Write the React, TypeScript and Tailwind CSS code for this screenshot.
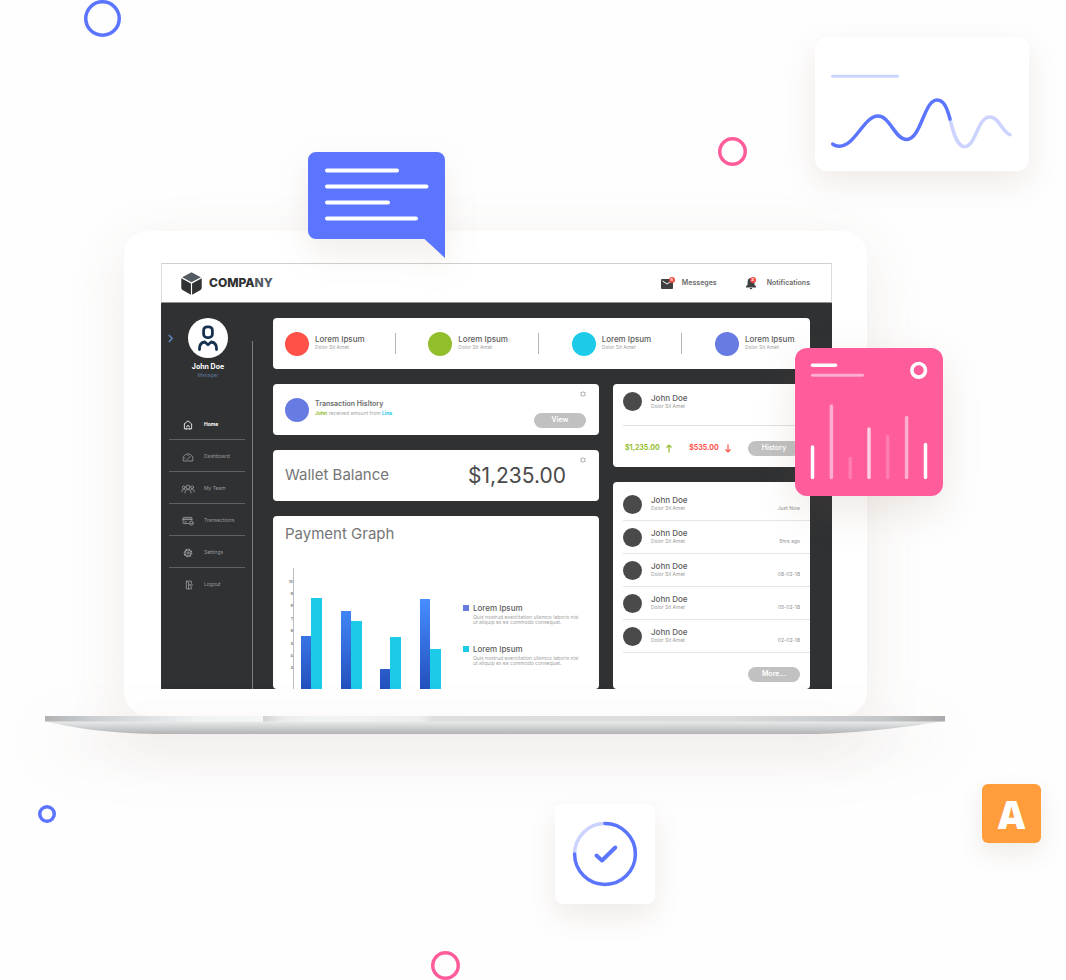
import type { ReactNode } from "react";

const cardClass = "rounded-[4px] bg-white";

function Ring({ className, size, color }: { className: string; size: number; color: string }) {
  return (
    <svg
      viewBox={`0 0 ${size} ${size}`}
      className={`absolute ${className}`}
      fill="none"
      stroke={color}
      strokeWidth="3.500"
      aria-hidden="true"
    >
      <circle cx={size / 2} cy={size / 2} r={size / 2 - 1.75} />
    </svg>
  );
}

function Pill({ children }: { children: ReactNode }) {
  return (
    <button
      type="button"
      className="flex h-[15px] w-[52px] items-center justify-center rounded-full bg-[#c1c1c1] text-[7px] font-semibold text-white"
    >
      {children}
    </button>
  );
}

function GearButton() {
  return (
    <button type="button" aria-label="Card settings" className="block">
      <svg viewBox="0 0 12 12" className="size-[6px]" fill="none" stroke="#a0a0a0" strokeWidth="1.500">
        <path d="M6 .8 7.500 3.200 10.600 3.200 9 6l1.600 2.800H7.500L6 11.200 4.500 8.800H1.400L3 6 1.400 3.200h3.100Z" />
      </svg>
    </button>
  );
}

function NavIcon({ children }: { children: ReactNode }) {
  return (
    <svg
      viewBox="0 0 24 18"
      className="h-[10px] w-[14px]"
      fill="none"
      stroke="currentColor"
      strokeWidth="1.5"
      strokeLinecap="round"
      strokeLinejoin="round"
    >
      {children}
    </svg>
  );
}

const navItems = [
  {
    label: "Home",
    icon: (
      <NavIcon>
        <path d="M5.500 7 12 1.500 18.500 7V16h-4M5.500 7v9h4M9.500 12.500a2.500 2.500 0 0 1 5 0M8.500 16h7" />
      </NavIcon>
    ),
  },
  {
    label: "Dashboard",
    icon: (
      <NavIcon>
        <path d="M3.500 15.500C1.500 8.500 6 3.500 12 3.500s10.500 5 8.500 12ZM10.500 13.500 16.500 7.500M6 11h1M12 6v.5" />
      </NavIcon>
    ),
  },
  {
    label: "My Team",
    icon: (
      <NavIcon>
        <circle cx="12" cy="5.500" r="3.500" />
        <circle cx="4.500" cy="6" r="2.500" />
        <circle cx="19.500" cy="6" r="2.500" />
        <path d="M6.500 16c0-4 2-6 5.500-6s5.500 2 5.500 6M1 14c0-3 1-4.500 3.500-4.500S7 10 7.500 11M23 14c0-3-1-4.500-3.500-4.500S17 10 16.500 11" />
      </NavIcon>
    ),
  },
  {
    label: "Transections",
    icon: (
      <NavIcon>
        <path d="M13 13.500H4a1 1 0 0 1-1-1v-9a1 1 0 0 1 1-1h14a1 1 0 0 1 1 1V8M3 5.500h16M3 6.500h16M6 10.500h3" />
        <circle cx="18" cy="13" r="3.500" />
        <path d="m16.500 13 1.200 1.200L20 12" />
      </NavIcon>
    ),
  },
  {
    label: "Settings",
    icon: (
      <NavIcon>
        <circle cx="12" cy="9" r="5.500" strokeWidth="2" />
        <circle cx="12" cy="9" r="2" />
        <circle cx="12" cy="9" r="7" strokeWidth="2" strokeDasharray="2.500 3" strokeLinecap="butt" />
      </NavIcon>
    ),
  },
  {
    label: "Logout",
    icon: (
      <NavIcon>
        <path d="M18 5.500V2H9v14h9v-3.500M9 2l4 2.500V16M20.500 9H15M17 7l-2 2 2 2" />
      </NavIcon>
    ),
  },
];

const stats = [
  { id: "red", dot: "bg-[#ff5148]" },
  { id: "green", dot: "bg-[#92be2c]" },
  { id: "cyan", dot: "bg-[#1ccbe8]" },
  { id: "indigo", dot: "bg-[#687be2]" },
];

const activity = ["Just Now", "5hrs ago", "08-02-18", "05-02-18", "02-02-18"];

const bars = [
  { x: 16, blue: 70, cyan: 32 },
  { x: 56, blue: 45, cyan: 55 },
  { x: 95, blue: 103, cyan: 71 },
  { x: 135, blue: 33, cyan: 83 },
];

function Badge({ count }: { count: number }) {
  return (
    <span className="absolute right-0 top-0 flex size-[6px] items-center justify-center rounded-full bg-[#f2483f] text-[4px] font-bold leading-none text-white">
      {count}
    </span>
  );
}

function TopBar() {
  return (
    <header className="flex h-10 items-center justify-between border border-b-[#8f9290] border-l-[#dcdcdc] border-r-[#dcdcdc] border-t-[#cfcfcf] bg-white pl-[19px] pr-[21px]">
      <a href="#home" className="flex items-center gap-[7px] text-[12px] font-extrabold leading-4">
        <svg viewBox="0 0 22 24" className="h-[23px] w-[21px]" aria-hidden="true">
          <path d="M11 .3 20.800 5.500 11 10.700 1.200 5.500Z" fill="#555b62" />
          <path d="M.3 6.600 10.400 12v11.700L2 19.100A3 3 0 0 1 .3 16.400Z" fill="#2f3133" />
          <path d="M21.700 6.600 11.600 12v11.700L20 19.100a3 3 0 0 0 1.700-2.700Z" fill="#2f3133" />
        </svg>
        <span className="text-[#2f3133]">
          COMPA<span className="text-[#555b62]">NY</span>
        </span>
      </a>
      <div className="flex items-center gap-[29px] text-[7px] font-semibold text-[#6b6b6b]">
        <a href="#messages" className="flex items-center gap-[7px]">
          <span className="relative block h-[13px] w-[14px]">
            <svg viewBox="0 0 14 13" className="h-[13px] w-[14px]" aria-hidden="true">
              <rect y="2" width="12" height="10" rx="1" fill="#3f4041" />
              <path d="m1.500 4 4.500 3 3.500-2.300" fill="none" stroke="#fff" />
            </svg>
            <Badge count={5} />
          </span>
          Messeges
        </a>
        <a href="#notifications" className="flex items-center gap-[11px]">
          <span className="relative block h-[13px] w-[10px]">
            <svg viewBox="0 0 10 13" className="h-[13px] w-[10px]" fill="#3f4041" aria-hidden="true">
              <path d="M5 1C2.500 1 1.600 3 1.600 5v2.500L0 9.500v1h10v-1L8.400 7.500V5c0-2-1-4-3.400-4ZM3.700 11a1.300 1.300 0 0 0 2.600 0Z" />
            </svg>
            <Badge count={3} />
          </span>
          Notifications
        </a>
      </div>
    </header>
  );
}

function Sidebar() {
  return (
    <aside className="relative w-[92px] shrink-0 px-2 pt-[15px]">
      <span aria-hidden="true" className="absolute bottom-0 right-0 top-[38px] w-px bg-[#7c7d7f]" />
      <button type="button" aria-label="Collapse menu" className="absolute left-[6px] top-[31px]">
        <svg viewBox="0 0 8 10" className="h-[9px] w-[7px]" fill="none" stroke="#6189bd" strokeWidth="1.700">
          <path d="M2 1 6 5 2 9" />
        </svg>
      </button>
      <div className="flex flex-col items-center pl-[2px]">
        <span className="flex size-10 items-center justify-center rounded-full bg-white">
          <svg
            viewBox="0 0 20 26"
            className="h-[26px] w-[20px]"
            fill="none"
            stroke="#17324f"
            strokeWidth="2.800"
            strokeLinecap="round"
            strokeLinejoin="round"
            aria-hidden="true"
          >
            <rect x="5.600" y="1.800" width="8.800" height="10.800" rx="3.600" />
            <path d="M1.500 24.500v-1.200c0-3.300 2.200-5.800 5.300-6.300L10 19.700l3.200-2.700c3.100.5 5.300 3 5.300 6.300v1.200" />
          </svg>
        </span>
        <span className="mt-1 text-[7px] font-bold leading-[10px] text-white">John Doe</span>
        <span className="text-[5px] leading-[6px] text-[#5d7898]">Manager</span>
      </div>
      <nav className="mt-[30px]">
        <ul>
          {navItems.map((item, i) => (
            <li key={item.label} className={i < navItems.length - 1 ? "border-b border-[#606163]" : ""}>
              <a
                href={`#${item.label.toLowerCase().replace(" ", "-")}`}
                className={`flex h-[31px] items-center gap-[9px] pl-3 pt-[3px] text-[5px] ${
                  i === 0 ? "font-bold text-white" : "text-[#9b9c9d]"
                }`}
              >
                {item.icon}
                {item.label}
              </a>
            </li>
          ))}
        </ul>
      </nav>
    </aside>
  );
}

function StatsCard() {
  return (
    <section className={`${cardClass} flex h-[51px] items-center justify-between pl-3 pr-[18px]`}>
      {stats.map((s, i) => (
        <div key={s.id} className="contents">
          {i > 0 && <span aria-hidden="true" className="h-[21px] w-px bg-[#b5b5b5]" />}
          <div className="flex w-[77px] items-center gap-[6px] whitespace-nowrap">
            <span className={`size-6 shrink-0 rounded-full ${s.dot}`} />
            <div className="pb-1">
              <h3 className="text-[8px] font-medium leading-[10px] text-[#5c5c5c]">Lorem Ipsum</h3>
              <p className="text-[5px] leading-[6px] text-[#a3a3a3]">Dolor Sit Amet</p>
            </div>
          </div>
        </div>
      ))}
    </section>
  );
}

function TransactionCard() {
  return (
    <section className={`${cardClass} flex h-[51px] items-center justify-between pl-3 pr-[13px]`}>
      <div className="flex items-center gap-[6px]">
        <span className="size-6 rounded-full bg-[#687be2]" />
        <div className="pb-1">
          <h3 className="text-[7px] font-semibold leading-[10px] text-[#6b6b6b]">Transaction Hisltory</h3>
          <p className="text-[5px] leading-[8px] text-[#a3a3a3]">
            <b className="text-[#92be2c]">John</b> received amount from <b className="text-[#1ccbe8]">Lina</b>
          </p>
        </div>
      </div>
      <div className="flex h-full flex-col items-end justify-between pb-[7px] pt-[7px]">
        <GearButton />
        <Pill>View</Pill>
      </div>
    </section>
  );
}

function WalletCard() {
  return (
    <section className={`${cardClass} flex h-[51px] items-center justify-between pl-3 pr-[13px]`}>
      <h2 className="text-[15px] text-[#767676]">Wallet Balance</h2>
      <div className="flex h-full gap-[14px]">
        <p className="self-center text-[21px] text-[#4a4a4a]">$1,235.00</p>
        <div className="pt-[7px]">
          <GearButton />
        </div>
      </div>
    </section>
  );
}

function LegendItem({ swatch }: { swatch: string }) {
  return (
    <li className="flex gap-[4px]">
      <span className={`mt-[2px] size-[6px] ${swatch}`} />
      <div>
        <h3 className="text-[8px] font-medium leading-[10px] text-[#5c5c5c]">Lorem Ipsum</h3>
        <p className="mt-[2px] whitespace-nowrap text-[5px] leading-[5px] text-[#a3a3a3]">
          Quis nostrud exercitation ullamco laboris nisi
          <br />
          ut aliquip ex ea commodo consequat.
        </p>
      </div>
    </li>
  );
}

function PaymentCard() {
  return (
    <section className={`${cardClass} flex flex-1 flex-col justify-between pl-3 pt-2`}>
      <h2 className="text-[15px] leading-5 text-[#767676]">Payment Graph</h2>
      <div className="flex justify-between pr-3">
        <svg viewBox="0 0 160 123" className="h-[123px] w-[160px]" role="img" aria-label="Payments by period">
          <defs>
            <linearGradient id="barBlue" gradientUnits="userSpaceOnUse" x1="0" y1="33" x2="0" y2="123">
              <stop offset="0" stopColor="#468dff" />
              <stop offset="1" stopColor="#2350bd" />
            </linearGradient>
          </defs>
          <path d="M8.500 2V123" stroke="#bdbdbd" />
          {[10, 9, 8, 7, 6, 5, 4, 3].map((n, i) => (
            <text key={n} x="8" y={16.5 + i * 12.4} textAnchor="end" fontSize="4" fontWeight="600" fill="#777">
              {n}
            </text>
          ))}
          {bars.map((b) => (
            <g key={b.x}>
              <rect x={b.x} y={b.blue} width="10" height={123 - b.blue} fill="url(#barBlue)" />
              <rect x={b.x + 10} y={b.cyan} width="11" height={123 - b.cyan} fill="#1ccbe8" />
            </g>
          ))}
        </svg>
        <ul className="flex w-[124px] flex-col gap-[19px] pt-[37px]">
          <LegendItem swatch="bg-[#687be2]" />
          <LegendItem swatch="bg-[#1ccbe8]" />
        </ul>
      </div>
    </section>
  );
}

function Person() {
  return (
    <div className="flex items-center gap-[9px]">
      <span className="size-[19px] rounded-full bg-[#4a4a4a]" />
      <div>
        <h3 className="text-[8px] font-medium leading-[9px] text-[#5c5c5c]">John Doe</h3>
        <p className="text-[5px] leading-[7px] text-[#9a9a9a]">Dolor Sit Amet</p>
      </div>
    </div>
  );
}

function Arrow({ down }: { down?: boolean }) {
  return (
    <svg
      viewBox="0 0 6 9"
      className={`h-[9px] w-[6px] ${down ? "rotate-180" : ""}`}
      fill="none"
      stroke="currentColor"
      strokeWidth="1.200"
      aria-hidden="true"
    >
      <path d="M3 8.500V1M.5 3.500 3 1l2.500 2.500" />
    </svg>
  );
}

function BalanceCard() {
  return (
    <section className={`${cardClass} h-[83px] pl-[10px] pt-2`}>
      <div className="flex h-[34px] items-start border-b border-[#e2e2e2]">
        <Person />
      </div>
      <div className="flex h-[44px] items-center justify-between pl-[2px] pr-[10px] text-[7px] font-bold">
        <span className="flex items-center gap-[6px] text-[#92be2c]">
          $1,235.00 <Arrow />
        </span>
        <span className="flex items-center gap-[6px] text-[#ff5148]">
          $535.00 <Arrow down />
        </span>
        <Pill>History</Pill>
      </div>
    </section>
  );
}

function ActivityCard() {
  return (
    <section className={`${cardClass} pb-[7px] pl-[10px] pt-[6px]`}>
      <ul>
        {activity.map((when) => (
          <li key={when} className="flex h-[33px] items-center justify-between border-b border-[#e6e6e6] pr-[10px]">
            <Person />
            <time className="pt-[7px] text-[5px] leading-[6px] text-[#8f8f8f]">{when}</time>
          </li>
        ))}
      </ul>
      <div className="mt-[14px] flex justify-end pr-[10px]">
        <Pill>More...</Pill>
      </div>
    </section>
  );
}

function Laptop() {
  return (
    <div className="w-full max-w-[900px]">
      <div className="ml-[79px] mr-[78px] rounded-[24px] bg-white pb-[27px] pl-[37px] pr-[35px] pt-8 shadow-[0_16px_60px_rgba(130,90,65,0.11)]">
        <div className="overflow-hidden bg-[#2f3133]">
          <TopBar />
          <div className="flex">
            <Sidebar />
            <div className="flex min-w-0 flex-1 flex-col gap-[15px] pl-5 pr-[22px] pt-[15px]">
              <StatsCard />
              <div className="flex gap-[14px]">
                <div className="flex flex-1 flex-col gap-[15px]">
                  <TransactionCard />
                  <WalletCard />
                  <PaymentCard />
                </div>
                <div className="flex w-[197px] flex-col gap-[15px]">
                  <BalanceCard />
                  <ActivityCard />
                </div>
              </div>
            </div>
          </div>
        </div>
      </div>
      <svg
        viewBox="0 0 900 18"
        preserveAspectRatio="none"
        className="relative h-[18px] w-full drop-shadow-[0_20px_26px_rgba(130,90,65,0.15)]"
        aria-hidden="true"
      >
        <defs>
          <linearGradient id="edge">
            <stop offset="0" stopColor="#b1b2b4" />
            <stop offset=".05" stopColor="#c9cdd0" />
            <stop offset=".17" stopColor="#f0f3f2" />
            <stop offset=".24" stopColor="#f5f6f6" />
            <stop offset=".43" stopColor="#dedede" />
            <stop offset=".75" stopColor="#dcdcdc" />
            <stop offset=".93" stopColor="#c4c6c8" />
            <stop offset="1" stopColor="#a9aaac" />
          </linearGradient>
          <linearGradient id="notch">
            <stop offset="0" stopColor="#d3d3d3" />
            <stop offset=".12" stopColor="#ebeceb" />
            <stop offset=".3" stopColor="#f2f4f3" />
            <stop offset=".92" stopColor="#eeeeee" />
            <stop offset="1" stopColor="#dddddd" />
          </linearGradient>
          <linearGradient id="belly" x2="0" y2="1">
            <stop offset="0" stopColor="#ebecec" />
            <stop offset="1" stopColor="#b2b3b6" />
          </linearGradient>
        </defs>
        <path d="M0 5H900C850 13 800 18 765 18H120C70 18 25 12 0 5Z" fill="url(#belly)" />
        <rect width="900" height="5.500" fill="url(#edge)" />
        <rect x="218" width="171" height="5.500" fill="url(#notch)" />
      </svg>
    </div>
  );
}

function ChatBubble() {
  return (
    <svg
      viewBox="0 0 137 106"
      className="absolute left-[308px] top-[152px] h-[106px] w-[137px] drop-shadow-[0_14px_16px_rgba(130,90,65,0.11)]"
      aria-hidden="true"
    >
      <path d="M8 0H129a8 8 0 0 1 8 8V106L116.500 87H8a8 8 0 0 1-8-8V8a8 8 0 0 1 8-8Z" fill="#5b75ff" />
      <path d="M19 18.500H89M19 34.500H118.500M19 50.500H80M19 66.500H108" stroke="#fff" strokeWidth="4" strokeLinecap="round" />
    </svg>
  );
}

function WaveCard() {
  return (
    <div className="absolute left-[815px] top-[37px] rounded-[12px] bg-white shadow-[0_12px_32px_rgba(130,90,65,0.12)]">
      <svg
        viewBox="0 0 214 134"
        className="h-[134px] w-[214px]"
        fill="none"
        strokeWidth="3.500"
        strokeLinecap="round"
        aria-hidden="true"
      >
        <path d="M17.500 39.300H82.500" stroke="#ccd3ff" strokeWidth="3" />
        <path d="M135 82C138 95 142 109.700 149.700 109.700C161 109.700 162 80 175 80C184 80 187 95 195 97.700" stroke="#ccd3ff" />
        <path
          d="M17.700 107Q20 109.200 24.500 109.200C40 109.200 49 79 63 79C75 79 80 102.500 91.700 102.500C106 102.500 109 63 122 63C129 63 132 71 135 82"
          stroke="#5b75ff"
        />
      </svg>
    </div>
  );
}

function PinkCard() {
  return (
    <div className="absolute left-[795px] top-[348px] rounded-[12px] bg-[#ff5c9c] shadow-[0_14px_40px_rgba(130,90,65,0.14)]">
      <svg viewBox="0 0 148 148" className="size-[148px]" fill="none" stroke="#fff" strokeLinecap="round" aria-hidden="true">
        <path d="M17.500 17.300H40.500" strokeWidth="3.500" />
        <path d="M17.500 27.300H67.500" strokeWidth="3" strokeOpacity=".5" />
        <circle cx="123.700" cy="22.300" r="6.800" strokeWidth="3.600" />
        <g strokeWidth="3.500">
          <path d="M17.500 99V129.500" />
          <path d="M36.400 58V129.500" strokeOpacity=".5" />
          <path d="M55.200 110.500V129.500" strokeOpacity=".2" />
          <path d="M74 81V129.500" strokeOpacity=".7" />
          <path d="M92.700 88.500V129.500" strokeOpacity=".2" />
          <path d="M111.600 69.500V129.500" strokeOpacity=".5" />
          <path d="M130.500 96.500V129.500" />
        </g>
      </svg>
    </div>
  );
}

function CheckCard() {
  return (
    <div className="absolute left-[555px] top-[804px] rounded-[8px] bg-white shadow-[0_12px_28px_rgba(130,90,65,0.12)]">
      <svg
        viewBox="0 0 100 100"
        className="size-[100px]"
        fill="none"
        strokeWidth="3.500"
        strokeLinecap="round"
        strokeLinejoin="round"
        aria-hidden="true"
      >
        <path d="M19.600 50A30.400 30.400 0 0 1 50 19.600" stroke="#ccd3ff" />
        <path d="M50 19.600A30.400 30.400 0 1 1 19.600 50" stroke="#5b75ff" />
        <path d="m41.500 51.500 5.500 5 13.300-13" stroke="#5b75ff" strokeWidth="4" />
      </svg>
    </div>
  );
}

export default function App() {
  return (
    <main className="relative overflow-hidden bg-[#fefefe] pb-[246px] pl-[45px] pt-[231px] font-['Inter','Noto_Sans',sans-serif]">
      <Laptop />
      <ChatBubble />
      <WaveCard />
      <PinkCard />
      <CheckCard />
      <div className="absolute left-[982px] top-[784px] flex size-[59px] items-center justify-center rounded-[6px] bg-[#ff9d3c] font-['Open_Sans','Inter',sans-serif] text-[38px] font-extrabold leading-none text-white shadow-[0_10px_24px_rgba(130,90,65,0.12)]">
        A
      </div>
      <Ring className="left-[84px] top-0 size-[37px]" size={37} color="#5b75ff" />
      <Ring className="left-[718px] top-[137px] size-[29px]" size={29} color="#ff5c9c" />
      <Ring className="left-[38px] top-[805px] size-[18px]" size={18} color="#5b75ff" />
      <Ring className="left-[431px] top-[951px] size-[29px]" size={29} color="#ff5c9c" />
    </main>
  );
}
